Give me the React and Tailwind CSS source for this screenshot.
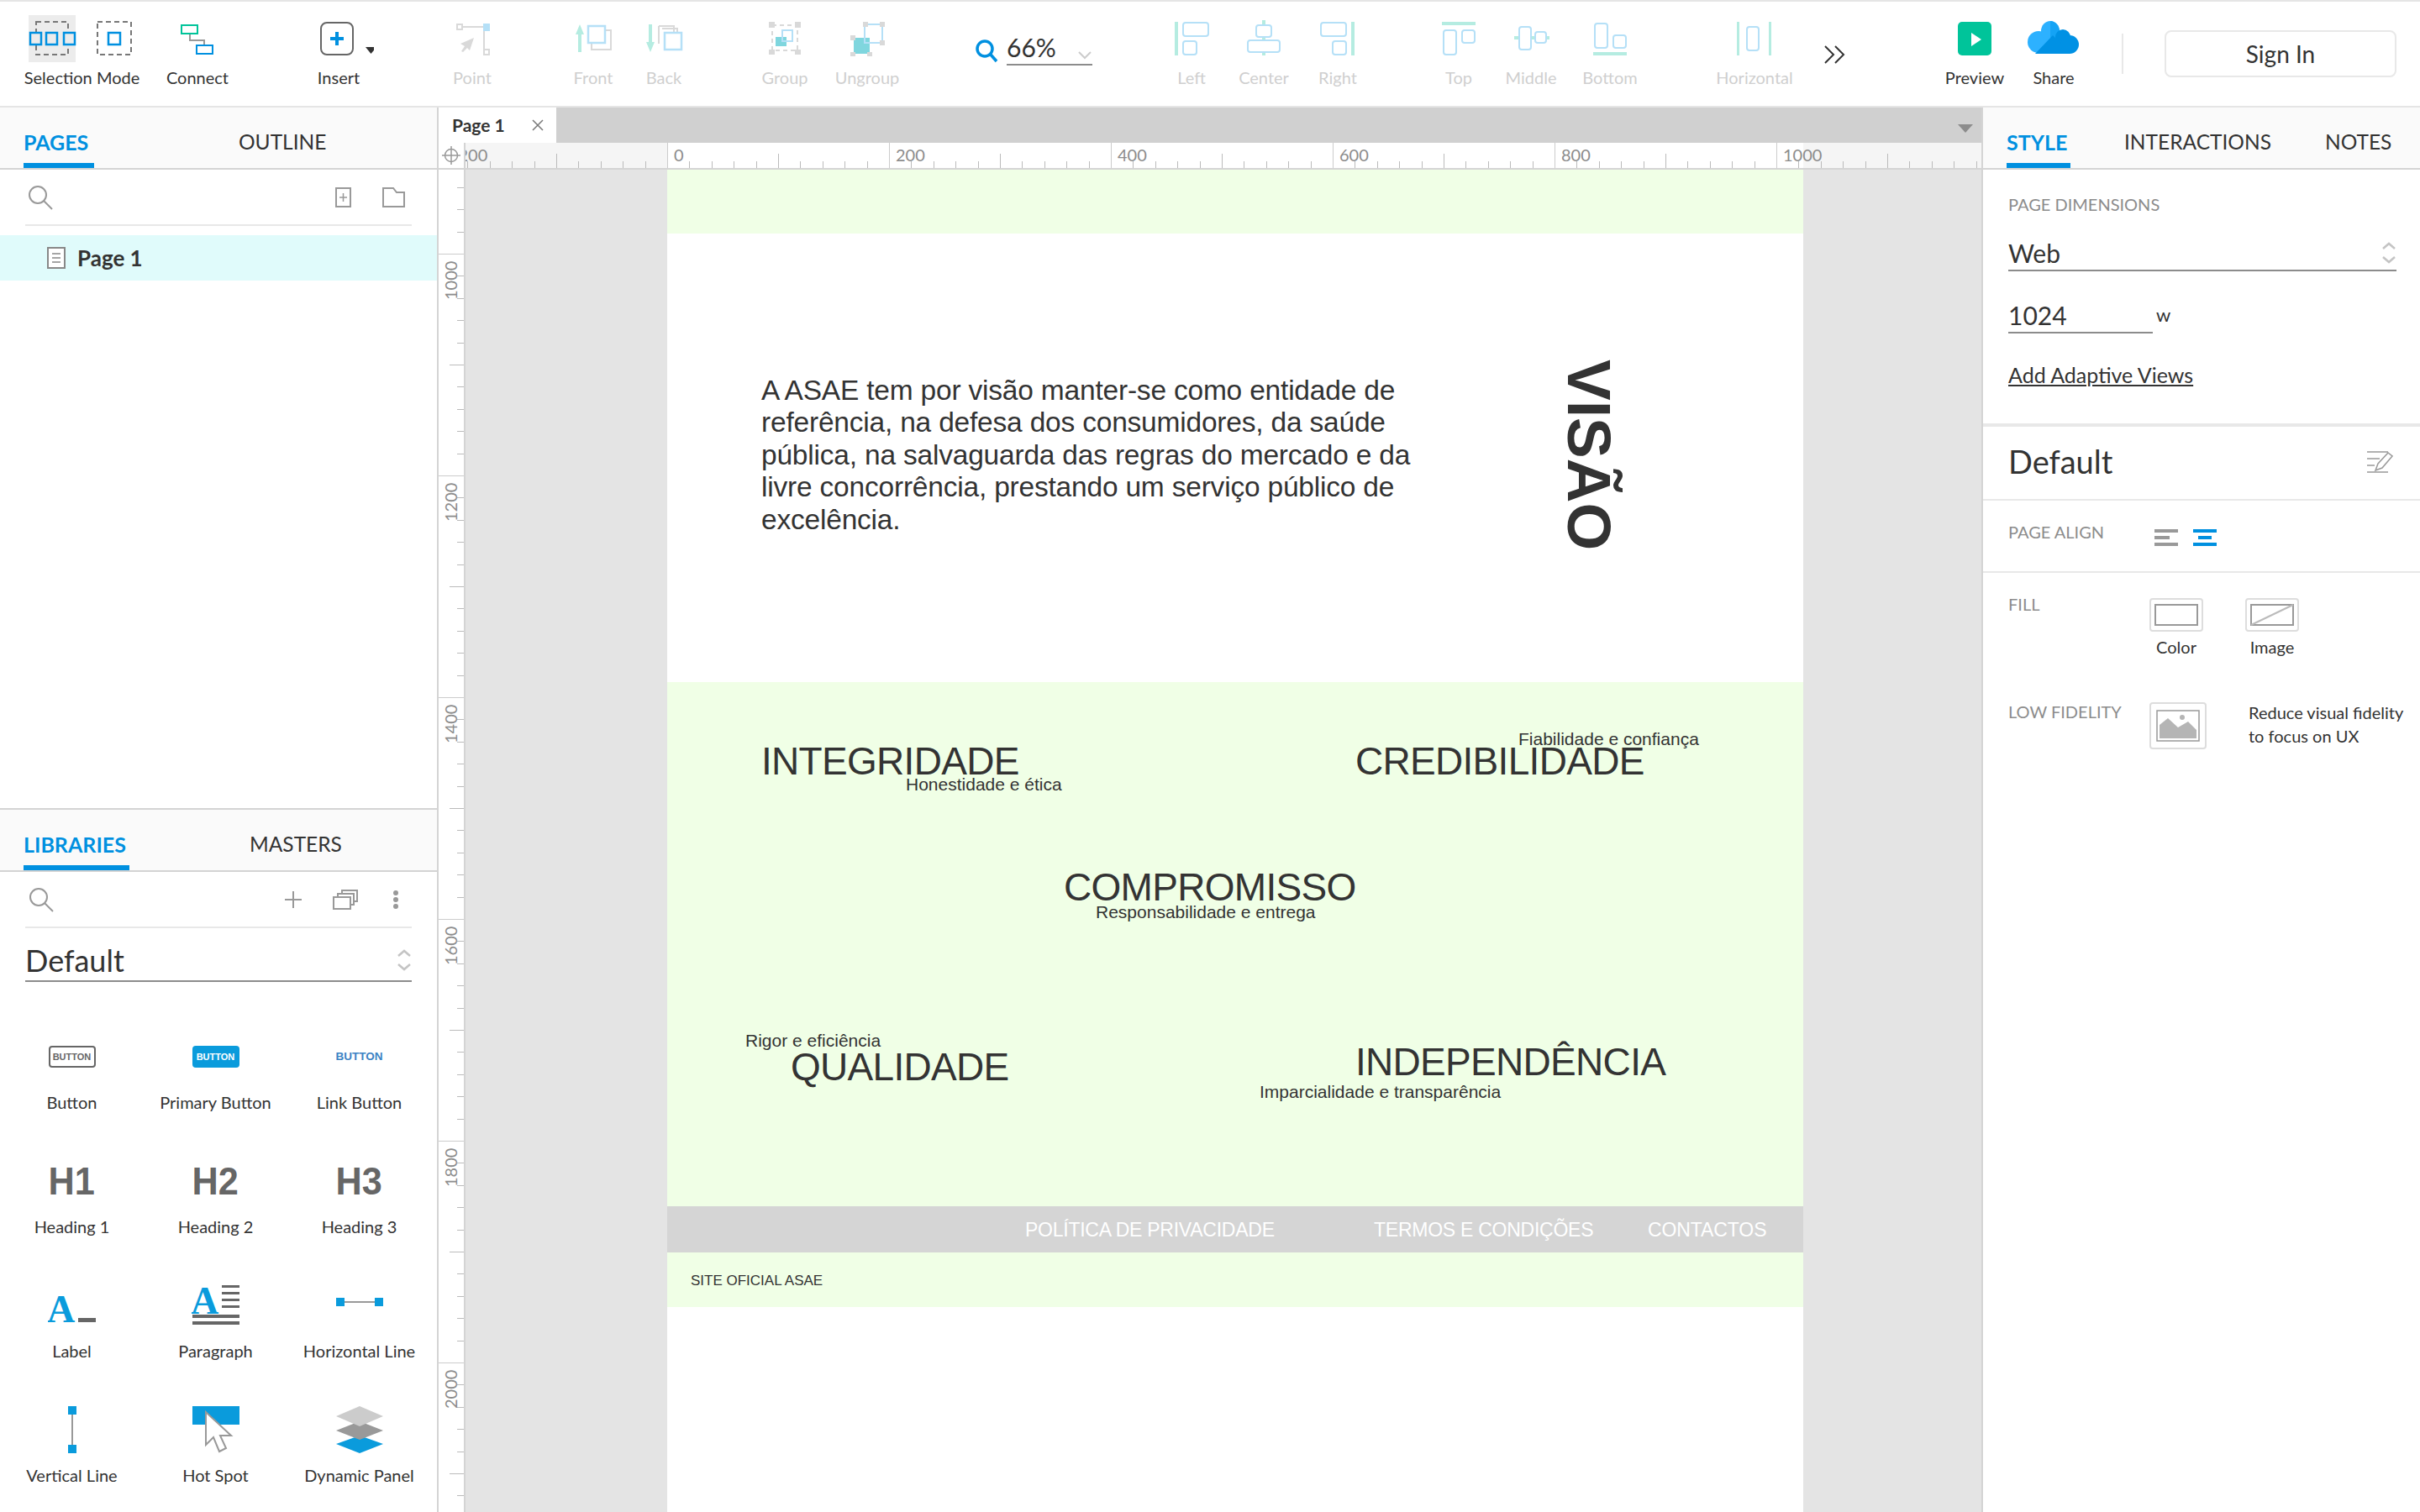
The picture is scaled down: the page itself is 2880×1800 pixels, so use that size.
import React from 'react';

const BLUE = '#b5e0f7';
const MINT = '#b5ece1';
const GRAY = '#d9d9d9';

const Box = ({ x, y, w, h, c = BLUE, sw = 2, r = 2, fill = 'none' }) => (
    <rect x={x} y={y} width={w} height={h} rx={r} fill={fill} stroke={c} strokeWidth={sw} />
);

// every toolbar icon is drawn in a 84x46 cell
const Icons = {
    Point: (
        <>
            <path d="M29 10H56V38" fill="none" stroke={GRAY} strokeWidth="2" />
            <Box x={24} y={7} w={6} h={6} c={GRAY} r={0} fill="#fff" />
            <rect x={55} y={6} width={8} height={9} fill={BLUE} />
            <Box x={56} y={37} w={6} h={6} c={GRAY} r={0} fill="#fff" />
            <path d="M44 23L28 30L33 33L29 39L31 40L36 35L39 38Z" fill={GRAY} />
        </>
    ),
    Front: (
        <>
            <path d="M26 7L31 19H28V40H24V19H21Z" fill={MINT} />
            <path d="M57 14H63V37H40V30" fill="none" stroke={GRAY} strokeWidth="2" />
            <Box x={36} y={9} w={20} h={20} r={0} sw={2.5} fill="#fff" />
        </>
    ),
    Back: (
        <>
            <path d="M26 40L31 28H28V7H24V28H21Z" fill={MINT} />
            <path d="M36 9H54V16M36 9V30" fill="none" stroke={GRAY} strokeWidth="2" />
            <path d="M40 12H58V18" fill="none" stroke={GRAY} strokeWidth="2" />
            <Box x={43} y={17} w={20} h={20} r={0} sw={2.5} fill="#fff" />
        </>
    ),
    Group: (
        <>
            <rect x={31} y={22} width={13} height={11} fill="#7fd6de" />
            <Box x={39} y={14} w={12} h={13} r={0} />
            <path d="M27 8H57V38H27Z" fill="none" stroke={GRAY} strokeWidth="2" strokeDasharray="5 4" />
            <rect x={23} y={4} width={7} height={7} fill={GRAY} />
            <rect x={54} y={4} width={7} height={7} fill={GRAY} />
            <rect x={23} y={37} width={7} height={6} fill={GRAY} />
            <rect x={54} y={37} width={7} height={6} fill={GRAY} />
        </>
    ),
    Ungroup: (
        <>
            <rect x={26} y={23} width={19} height={19} fill="#7fd6de" />
            <Box x={39} y={7} w={21} h={22} r={0} />
            <rect x={22} y={20} width={6} height={6} fill={GRAY} />
            <rect x={22} y={40} width={6} height={5} fill={GRAY} />
            <rect x={42} y={40} width={6} height={5} fill={GRAY} />
            <rect x={37} y={4} width={6} height={6} fill={GRAY} />
            <rect x={57} y={4} width={6} height={6} fill={GRAY} />
            <rect x={57} y={26} width={6} height={6} fill={GRAY} />
        </>
    ),
    Left: (
        <>
            <rect x={22} y={4} width={4} height={40} fill={MINT} />
            <Box x={32} y={5} w={30} h={16} r={3} />
            <Box x={32} y={27} w={16} h={16} r={3} />
        </>
    ),
    Center: (
        <>
            <rect x={40} y={2} width={4} height={42} fill={MINT} />
            <Box x={33} y={8} w={18} h={14} r={3} fill="#fff" />
            <Box x={23} y={26} w={38} h={14} r={3} fill="#fff" />
        </>
    ),
    Right: (
        <>
            <rect x={58} y={4} width={4} height={40} fill={MINT} />
            <Box x={22} y={5} w={30} h={16} r={3} />
            <Box x={36} y={27} w={16} h={16} r={3} />
        </>
    ),
    Top: (
        <>
            <rect x={22} y={4} width={40} height={4} fill={MINT} />
            <Box x={24} y={14} w={15} h={29} r={3} />
            <Box x={46} y={14} w={15} h={15} r={3} />
        </>
    ),
    Middle: (
        <>
            <rect x={22} y={21} width={42} height={4} fill={MINT} />
            <Box x={28} y={10} w={14} h={27} r={3} fill="#fff" />
            <Box x={47} y={16} w={13} h={13} r={3} fill="#fff" />
        </>
    ),
    Bottom: (
        <>
            <rect x={22} y={40} width={40} height={4} fill={MINT} />
            <Box x={24} y={6} w={15} h={29} r={3} />
            <Box x={46} y={20} w={15} h={15} r={3} />
        </>
    ),
    Horizontal: (
        <>
            <rect x={21} y={4} width={3} height={40} fill={MINT} />
            <rect x={59} y={4} width={3} height={40} fill={MINT} />
            <Box x={33} y={10} w={14} h={28} r={3} />
        </>
    ),
};

const topTools = [
    { label: 'Point', ml: 'ml-[75px]' },
    { label: 'Front', ml: 'ml-[60px]' },
    { label: 'Back', ml: 'ml-0' },
    { label: 'Group', ml: 'ml-[60px]' },
    { label: 'Ungroup', ml: 'ml-[14px]' },
];

const alignTools = [
    { label: 'Left', ml: 'ml-[76px]' },
    { label: 'Center', ml: 'ml-[2px]' },
    { label: 'Right', ml: 'ml-[4px]' },
    { label: 'Top', ml: 'ml-[60px]' },
    { label: 'Middle', ml: 'ml-[2px]' },
    { label: 'Bottom', ml: 'ml-[10px]' },
    { label: 'Horizontal', ml: 'ml-[88px]' },
];

const Tool = ({ label, ml = '', dim = false, children }) => (
    <div className={`w-[84px] flex flex-col items-center shrink-0 ${ml}`}>
        <svg width="84" height="46" className="shrink-0">{children}</svg>
        <span className={`mt-[12px] text-[20px] leading-[24px] whitespace-nowrap ${dim ? 'text-[#cfcfcf]' : 'text-[#333]'}`}>{label}</span>
    </div>
);

const Toolbar = () => (
    <div className="h-[128px] shrink-0 bg-white border-y-2 border-[#e5e5e5] flex pt-[20px] pl-[30px]">
        <div className="w-[135px] shrink-0 flex flex-col items-center">
            <svg width="135" height="46" className="shrink-0 overflow-visible">
                <rect x="4" y="-4" width="56" height="56" fill="#ececec" />
                <path d="M13 4H51V43H13Z" fill="none" stroke="#777" strokeWidth="2" strokeDasharray="6 4" />
                <path d="M86 4H126V43H86Z" fill="none" stroke="#777" strokeWidth="2" strokeDasharray="6 4" />
                {[5, 24, 45].map(x => (
                    <rect key={x} x={x + 1} y="17" width="13" height="14" fill="#ececec" stroke="#0090e0" strokeWidth="2.5" />
                ))}
                <rect x="99" y="17" width="14" height="14" fill="#fff" stroke="#0090e0" strokeWidth="2.5" />
            </svg>
            <span className="mt-[12px] text-[20px] leading-[24px] text-[#333] whitespace-nowrap relative">Selection Mode</span>
        </div>
        <Tool label="Connect" ml="ml-[28px]">
            <path d="M33 17V26H50V33" fill="none" stroke="#999" strokeWidth="2" />
            <rect x="23" y="8" width="19" height="10" fill="#fff" stroke="#00c49a" strokeWidth="2" />
            <rect x="41" y="32" width="19" height="10" fill="#fff" stroke="#0090e0" strokeWidth="2" />
        </Tool>
        <Tool label="Insert" ml="ml-[84px]">
            <rect x="21" y="5" width="38" height="38" rx="7" fill="#fff" stroke="#666" strokeWidth="2" />
            <path d="M40 16V32M32 24H48" stroke="#0090e0" strokeWidth="4" />
            <path d="M74 34H87L80.5 42Z" fill="#333" />
        </Tool>
        {topTools.map(t => (
            <Tool key={t.label} label={t.label} ml={t.ml} dim>{Icons[t.label]}</Tool>
        ))}
        <div className="w-[140px] ml-[86px] shrink-0 flex items-start pt-[16px]">
            <svg width="32" height="30" className="shrink-0 mt-[8px]">
                <circle cx="12" cy="12" r="9" fill="none" stroke="#0090e0" strokeWidth="3.5" />
                <path d="M19 19L26 27" stroke="#0090e0" strokeWidth="3.5" />
            </svg>
            <div className="w-[102px] ml-[6px] h-[40px] border-b-2 border-[#8c8c8c] flex justify-between text-[30px] leading-[36px] text-[#333]">
                66%
                <svg width="18" height="12" className="mt-[22px]"><path d="M2 2L9 9L16 2" fill="none" stroke="#ccc" strokeWidth="2" /></svg>
            </div>
        </div>
        {alignTools.map(t => (
            <Tool key={t.label} label={t.label} ml={t.ml} dim>{Icons[t.label]}</Tool>
        ))}
        <svg width="26" height="24" className="ml-[40px] mt-[31px] shrink-0">
            <path d="M2 2L12 12L2 22M14 2L24 12L14 22" fill="none" stroke="#333" strokeWidth="2" />
        </svg>
        <Tool label="Preview" ml="ml-[112px]">
            <rect x="22" y="4" width="40" height="40" rx="5" fill="#00c49a" />
            <path d="M38 17L50 25L38 33Z" fill="#fff" />
        </Tool>
        <Tool label="Share" ml="ml-[10px]">
            <circle cx="24" cy="28" r="13" fill="#2db1ff" />
            <ellipse cx="38" cy="15" rx="11" ry="12" fill="#2db1ff" />
            <path d="M38 3C44 3 49 9 49 15C49 18 48 21 46 24L38 24Z" fill="#14a3f5" />
            <circle cx="53" cy="22" r="9" fill="#0091e4" />
            <circle cx="61" cy="31" r="11" fill="#0091e4" />
            <path d="M41 20L62 42H20Z" fill="#0091e4" />
        </Tool>
        <div className="w-[2px] h-[48px] ml-[39px] mt-[18px] bg-[#e8e8e8] shrink-0" />
        <div className="w-[276px] h-[56px] ml-[49px] mt-[14px] shrink-0 rounded-[8px] border-2 border-[#e8e8e8] flex items-center justify-center text-[28px] text-[#333]">Sign In</div>
    </div>
);

const TabRow = ({ children, h = 'h-[74px]' }) => (
    <div className={`${h} shrink-0 bg-[#fafafa] border-b-2 border-[#d4d4d4] flex`}>{children}</div>
);

const Tab = ({ label, active, ml, w }) => (
    <div className={`${ml} ${w} h-[72px] pt-[27px] leading-[28px] whitespace-nowrap ${active ? 'text-[25px] text-[#0090e0] font-bold border-b-[6px] border-[#0090e0]' : 'text-[24.5px] text-[#333]'}`}>{label}</div>
);

const Search = () => (
    <svg width="32" height="30" className="shrink-0">
        <circle cx="12" cy="12" r="10" fill="none" stroke="#999" strokeWidth="2" />
        <path d="M19 19L29 29" stroke="#999" strokeWidth="2" />
    </svg>
);

const Chevrons = () => (
    <svg width="18" height="26" className="shrink-0">
        <path d="M2 8L9 2L16 8M2 18L9 24L16 18" fill="none" stroke="#c4c4c4" strokeWidth="2.5" />
    </svg>
);

const libItems = [
    {
        label: 'Button',
        icon: <div className="w-[56px] h-[26px] rounded-[4px] border-2 border-[#666] flex items-center justify-center text-[11px] font-bold text-[#666] font-['Liberation_Sans',sans-serif]">BUTTON</div>,
    },
    {
        label: 'Primary Button',
        icon: <div className="w-[56px] h-[26px] rounded-[4px] bg-[#0a9bdc] flex items-center justify-center text-[11px] font-bold text-white font-['Liberation_Sans',sans-serif]">BUTTON</div>,
    },
    {
        label: 'Link Button',
        icon: <div className="w-[56px] h-[26px] flex items-center justify-center text-[13.5px] font-bold text-[#3b82c4] font-['Liberation_Sans',sans-serif]">BUTTON</div>,
    },
    ...['H1', 'H2', 'H3'].map((h, i) => ({
        label: `Heading ${i + 1}`,
        icon: <div className="text-[47px] leading-[56px] font-bold text-[#666] scale-x-[.92] font-['Liberation_Sans',sans-serif]">{h}</div>,
    })),
    {
        label: 'Label',
        icon: (
            <svg width="58" height="56">
                <text x="-1" y="48" fontFamily="Liberation Serif" fontWeight="700" fontSize="46" fill="#0a9bdc">A</text>
                <rect x="36" y="43" width="21" height="5" fill="#666" />
            </svg>
        ),
    },
    {
        label: 'Paragraph',
        icon: (
            <svg width="58" height="56">
                <text x="-1" y="38" fontFamily="Liberation Serif" fontWeight="700" fontSize="46" fill="#0a9bdc">A</text>
                {[4, 12, 20, 28].map(y => <rect key={y} x="36" y={y} width="21" height="3" fill="#666" />)}
                {[39, 47].map(y => <rect key={y} x="1" y={y} width="56" height="4" fill="#666" />)}
            </svg>
        ),
    },
    {
        label: 'Horizontal Line',
        icon: (
            <svg width="58" height="56">
                <rect x="5" y="23" width="48" height="2" fill="#999" />
                <rect x="1" y="19" width="10" height="10" fill="#0a9bdc" />
                <rect x="47" y="19" width="10" height="10" fill="#0a9bdc" />
            </svg>
        ),
    },
    {
        label: 'Vertical Line',
        icon: (
            <svg width="58" height="56">
                <rect x="28" y="5" width="2" height="48" fill="#999" />
                <rect x="24" y="0" width="10" height="10" fill="#0a9bdc" />
                <rect x="24" y="46" width="10" height="10" fill="#0a9bdc" />
            </svg>
        ),
    },
    {
        label: 'Hot Spot',
        icon: (
            <svg width="58" height="56">
                <rect x="1" y="0" width="56" height="22" fill="#0a9bdc" />
                <path d="M17 7V46L26 37L33 54L41 50L34 35H47Z" fill="#fff" stroke="#999" strokeWidth="2" />
            </svg>
        ),
    },
    {
        label: 'Dynamic Panel',
        icon: (
            <svg width="58" height="56">
                <path d="M1 45L29 35L57 45L29 56Z" fill="#0a9bdc" />
                <path d="M1 29L29 18L57 29L29 40Z" fill="#999" />
                <path d="M1 12L29 0L57 12L29 24Z" fill="#ccc" />
            </svg>
        ),
    },
];

const LeftPanel = () => (
    <div className="w-[522px] shrink-0 border-r-2 border-[#d4d4d4] flex flex-col bg-white">
        <div className="h-[834px] shrink-0">
            <TabRow>
                <Tab label="PAGES" active ml="ml-[28px]" w="w-[84px]" />
                <Tab label="OUTLINE" ml="ml-[172px]" />
            </TabRow>
            <div className="h-[65px] flex items-center pl-[33px]">
                <Search />
                <svg width="20" height="24" className="ml-[334px]">
                    <rect x="1" y="1" width="17" height="22" fill="none" stroke="#999" strokeWidth="2" />
                    <path d="M9.5 7V17M5 12H14" stroke="#999" strokeWidth="1.5" />
                </svg>
                <svg width="28" height="24" className="ml-[36px]">
                    <path d="M1 1H13L17 6H26V23H1Z" fill="none" stroke="#999" strokeWidth="2" />
                </svg>
            </div>
            <div className="mx-[30px] h-[2px] bg-[#e8e8e8]" />
            <div className="mt-[11px] h-[54px] bg-[#e0fbfb] flex items-center pl-[56px]">
                <svg width="22" height="26">
                    <rect x="1" y="1" width="20" height="24" fill="#fff" stroke="#888" strokeWidth="2" />
                    <path d="M6 8H16M6 13H16M6 18H16" stroke="#888" strokeWidth="1.5" />
                </svg>
                <span className="ml-[14px] text-[26px] leading-[30px] font-bold text-[#333]">Page 1</span>
            </div>
        </div>
        <div className="border-t-2 border-[#d4d4d4] flex-1">
            <TabRow>
                <Tab label="LIBRARIES" active ml="ml-[28px]" w="w-[126px]" />
                <Tab label="MASTERS" ml="ml-[143px]" />
            </TabRow>
            <div className="h-[65px] flex items-center pl-[34px]">
                <Search />
                <svg width="22" height="22" className="ml-[272px]"><path d="M11 1V21M1 11H21" stroke="#999" strokeWidth="2" /></svg>
                <svg width="30" height="24" className="ml-[36px]">
                    <path d="M1 9H21V23H1ZM6 9V5H25V18H21M11 5V1H29V14H25" fill="none" stroke="#999" strokeWidth="2" />
                </svg>
                <svg width="8" height="24" className="ml-[41px]">
                    <circle cx="4" cy="4" r="3" fill="#999" /><circle cx="4" cy="12" r="3" fill="#999" /><circle cx="4" cy="20" r="3" fill="#999" />
                </svg>
            </div>
            <div className="mx-[30px] h-[2px] bg-[#e8e8e8]" />
            <div className="mx-[30px] h-[64px] border-b-2 border-[#8c8c8c] flex items-center justify-between pt-[14px]">
                <span className="text-[36px] leading-[44px] text-[#333]">Default</span>
                <Chevrons />
            </div>
            <div className="mt-[61px] grid grid-cols-[171px_171px_171px] gap-y-[54px]">
                {libItems.map(item => (
                    <div key={item.label} className="flex flex-col items-center">
                        <div className="h-[56px] flex items-center justify-center">{item.icon}</div>
                        <span className="mt-[14px] text-[20px] leading-[24px] text-[#333] whitespace-nowrap">{item.label}</span>
                    </div>
                ))}
            </div>
        </div>
    </div>
);

const topTicks = Array.from({ length: 70 }, (_, i) => i - 10);
const sideTicks = Array.from({ length: 61 }, (_, i) => i - 4);

const TopRuler = () => (
    <svg width="1804" height="30" className="block shrink-0">
        <rect width="1804" height="30" fill="#f5f5f5" />
        <rect x="240" width="1352" height="30" fill="#fff" />
        {topTicks.map(i => {
            const x = Math.round(240 + i * 26.4);
            const h = i % 10 === 0 ? 30 : i % 5 === 0 ? 17 : 8;
            return <rect key={i} x={x} y={30 - h} width="1" height={h} fill={i % 10 === 0 ? '#ccc' : '#bbb'} />;
        })}
        {[-200, 0, 200, 400, 600, 800, 1000].map(n => (
            <text key={n} x={240 + n * 1.32 + 8} y="22" fontSize="20" fill="#8c8c8c">{n}</text>
        ))}
    </svg>
);

const SideRuler = () => (
    <svg width="32" height="1598" className="block shrink-0">
        <rect width="30" height="1598" fill="#fff" />
        <rect x="30" width="2" height="1598" fill="#d4d4d4" />
        {sideTicks.map(i => {
            const y = Math.round(100 + i * 26.4);
            const w = i % 10 === 0 ? 30 : i % 5 === 0 ? 17 : 8;
            return <rect key={i} x={30 - w} y={y} width={w} height="1" fill={i % 10 === 0 ? '#ccc' : '#bbb'} />;
        })}
        {[1000, 1200, 1400, 1600, 1800, 2000].map((n, i) => (
            <text key={n} transform={`translate(22 ${155 + i * 264}) rotate(-90)`} fontSize="20" fill="#8c8c8c">{n}</text>
        ))}
    </svg>
);

// text boxes of the prototype sit freely on its page
const Free = ({ className, children }) => (
    <div className={`absolute whitespace-nowrap text-[#333] ${className}`}>{children}</div>
);

const Page = () => (
    <div className="relative w-[1352px] ml-[240px] h-full bg-white overflow-hidden font-['Liberation_Sans',Arial,sans-serif]">
        <div className="h-[76px] bg-[#f0ffe6]" />
        <div className="h-[534px]" />
        <div className="h-[624px] bg-[#f0ffe6]" />
        <div className="h-[55px] bg-[#d5d5d5] relative">
            <span className="absolute left-[426px] top-[14px] text-[23px] leading-[28px] text-white tracking-[-.25px]">POLÍTICA DE PRIVACIDADE</span>
            <span className="absolute left-[841px] top-[14px] text-[23px] leading-[28px] text-white tracking-[-.25px]">TERMOS E CONDIÇÕES</span>
            <span className="absolute left-[1167px] top-[14px] text-[23px] leading-[28px] text-white tracking-[-.1px]">CONTACTOS</span>
        </div>
        <div className="h-[65px] bg-[#f0ffe6] flex items-center pl-[28px] pt-[2px] text-[17px] text-[#333]">SITE OFICIAL ASAE</div>

        <Free className="left-[112px] top-[244px] text-[33.5px] leading-[38.4px] tracking-[-.2px]">
            A ASAE tem por visão manter-se como entidade de<br />
            referência, na defesa dos consumidores, da saúde<br />
            pública, na salvaguarda das regras do mercado e da<br />
            livre concorrência, prestando um serviço público de<br />
            excelência.
        </Free>
        <Free className="left-[1055px] top-[226px] text-[73px] leading-[84px] font-bold [writing-mode:vertical-rl]">VISÃO</Free>

        <Free className="left-[112px] top-[678px] text-[46px] leading-[52px] tracking-[-.7px]">INTEGRIDADE</Free>
        <Free className="left-[284px] top-[720px] text-[21px] leading-[24px]">Honestidade e ética</Free>
        <Free className="left-[819px] top-[678px] text-[46px] leading-[52px] tracking-[-.7px]">CREDIBILIDADE</Free>
        <Free className="left-[1013px] top-[666px] text-[21px] leading-[24px]">Fiabilidade e confiança</Free>
        <Free className="left-[472px] top-[828px] text-[46px] leading-[52px] tracking-[-.7px]">COMPROMISSO</Free>
        <Free className="left-[510px] top-[872px] text-[21px] leading-[24px]">Responsabilidade e entrega</Free>
        <Free className="left-[93px] top-[1025px] text-[21px] leading-[24px]">Rigor e eficiência</Free>
        <Free className="left-[147px] top-[1042px] text-[46px] leading-[52px] tracking-[-.7px]">QUALIDADE</Free>
        <Free className="left-[819px] top-[1036px] text-[46px] leading-[52px] tracking-[-.7px]">INDEPENDÊNCIA</Free>
        <Free className="left-[705px] top-[1086px] text-[21px] leading-[24px]">Imparcialidade e transparência</Free>
    </div>
);

const Canvas = () => (
    <div className="flex-1 min-w-0 flex flex-col">
        <div className="h-[42px] shrink-0 bg-[#d0d0d0] flex relative">
            <div className="w-[140px] bg-white flex items-center pl-[16px] text-[21px] font-bold text-[#333]">
                Page 1
                <svg width="14" height="14" className="ml-[32px]"><path d="M1 1L13 13M13 1L1 13" stroke="#777" strokeWidth="1.5" /></svg>
            </div>
            <svg width="18" height="10" className="absolute right-[10px] top-[20px]"><path d="M0 0H18L9 10Z" fill="#8c8c8c" /></svg>
        </div>
        <div className="flex shrink-0 border-b-2 border-[#d4d4d4]">
            <div className="w-[32px] h-[30px] bg-white border-r-2 border-[#d4d4d4] flex items-center justify-center shrink-0">
                <svg width="22" height="22">
                    <circle cx="11" cy="11" r="7.5" fill="none" stroke="#999" strokeWidth="1.5" />
                    <path d="M11 0V22M0 11H22" stroke="#999" strokeWidth="1.5" />
                </svg>
            </div>
            <TopRuler />
        </div>
        <div className="flex-1 min-h-0 flex">
            <SideRuler />
            <div className="flex-1 min-w-0 bg-[#e4e4e4] overflow-hidden"><Page /></div>
        </div>
    </div>
);

const Label = ({ children, className = '' }) => (
    <div className={`text-[20px] leading-[24px] text-[#8c8c8c] whitespace-nowrap ${className}`}>{children}</div>
);

const RightPanel = () => (
    <div className="w-[522px] shrink-0 border-l-2 border-[#d4d4d4] bg-white flex flex-col">
        <TabRow>
            <Tab label="STYLE" active ml="ml-[28px]" w="w-[76px]" />
            <Tab label="INTERACTIONS" ml="ml-[64px]" />
            <Tab label="NOTES" ml="ml-[64px]" />
        </TabRow>
        <div className="h-[306px] shrink-0 px-[30px] pt-[29px] border-b-4 border-[#e8e8e8]">
            <Label>PAGE DIMENSIONS</Label>
            <div className="mt-[26px] h-[42px] w-[462px] border-b-2 border-[#8c8c8c] flex items-center justify-between text-[30px] leading-[40px] text-[#333]">
                Web
                <Chevrons />
            </div>
            <div className="mt-[32px] flex">
                <div className="w-[172px] h-[42px] border-b-2 border-[#8c8c8c] text-[30px] leading-[40px] text-[#333]">1024</div>
                <span className="ml-[4px] mt-[6px] text-[22px] leading-[28px] text-[#333]">w</span>
            </div>
            <div className="mt-[35px] text-[25px] leading-[28px] text-[#333] underline underline-offset-2">Add Adaptive Views</div>
        </div>
        <div className="h-[88px] shrink-0 border-b-2 border-[#e8e8e8] pl-[30px] pr-[32px] pb-[3px] flex items-center justify-between">
            <span className="text-[38px] text-[#333]">Default</span>
            <svg width="32" height="28">
                <path d="M1 2H26M1 10H16M1 18H10M1 26H26" stroke="#999" strokeWidth="1.5" />
                <path d="M11 24L14 16L26 3L31 7L19 21Z" fill="#fff" stroke="#999" strokeWidth="1.5" />
            </svg>
        </div>
        <div className="h-[86px] shrink-0 border-b-2 border-[#e8e8e8] pl-[30px] pt-[25px] flex">
            <Label className="w-[174px]">PAGE ALIGN</Label>
            <svg width="28" height="20" className="mt-[9px]"><path d="M0 2H28M0 10H18M0 18H28" stroke="#999" strokeWidth="4" /></svg>
            <svg width="28" height="20" className="mt-[9px] ml-[18px]"><path d="M0 2H28M6 10H22M0 18H28" stroke="#0090e0" strokeWidth="4" /></svg>
        </div>
        <div className="pl-[30px] pt-[25px] flex">
            <Label className="w-[168px]">FILL</Label>
            <div className="flex flex-col items-center w-[64px]">
                <div className="w-[64px] h-[40px] mt-[5px] rounded-[4px] border-2 border-[#ddd] flex items-center justify-center">
                    <div className="w-[52px] h-[26px] border-2 border-[#999]" />
                </div>
                <span className="mt-[6px] text-[20px] leading-[24px] text-[#333]">Color</span>
            </div>
            <div className="flex flex-col items-center w-[64px] ml-[50px]">
                <div className="w-[64px] h-[40px] mt-[5px] rounded-[4px] border-2 border-[#ddd] flex items-center justify-center">
                    <svg width="52" height="26"><rect x="1" y="1" width="50" height="24" fill="none" stroke="#999" strokeWidth="2" /><path d="M1 25L51 1" stroke="#bbb" strokeWidth="2" /></svg>
                </div>
                <span className="mt-[6px] text-[20px] leading-[24px] text-[#333]">Image</span>
            </div>
        </div>
        <div className="pl-[30px] mt-[52px] flex">
            <Label className="w-[168px] mt-[1px]">LOW FIDELITY</Label>
            <div className="w-[68px] h-[56px] mt-[2px] rounded-[4px] border-2 border-[#ddd] flex items-center justify-center">
                <svg width="52" height="38">
                    <rect x="1" y="1" width="50" height="36" fill="none" stroke="#999" strokeWidth="1.5" />
                    <path d="M4 34V18L14 10L26 21L38 14L48 24V34Z" fill="#b5b5b5" />
                    <circle cx="31" cy="9" r="3" fill="#b5b5b5" />
                </svg>
            </div>
            <div className="ml-[50px] text-[20px] leading-[28px] text-[#333] whitespace-nowrap">Reduce visual fidelity<br />to focus on UX</div>
        </div>
    </div>
);

export default function App() {
    return (
        <div className="w-[2880px] h-[1800px] overflow-hidden flex flex-col bg-white font-['Lato',sans-serif]">
            <Toolbar />
            <div className="flex-1 min-h-0 flex">
                <LeftPanel />
                <Canvas />
                <RightPanel />
            </div>
        </div>
    );
}
